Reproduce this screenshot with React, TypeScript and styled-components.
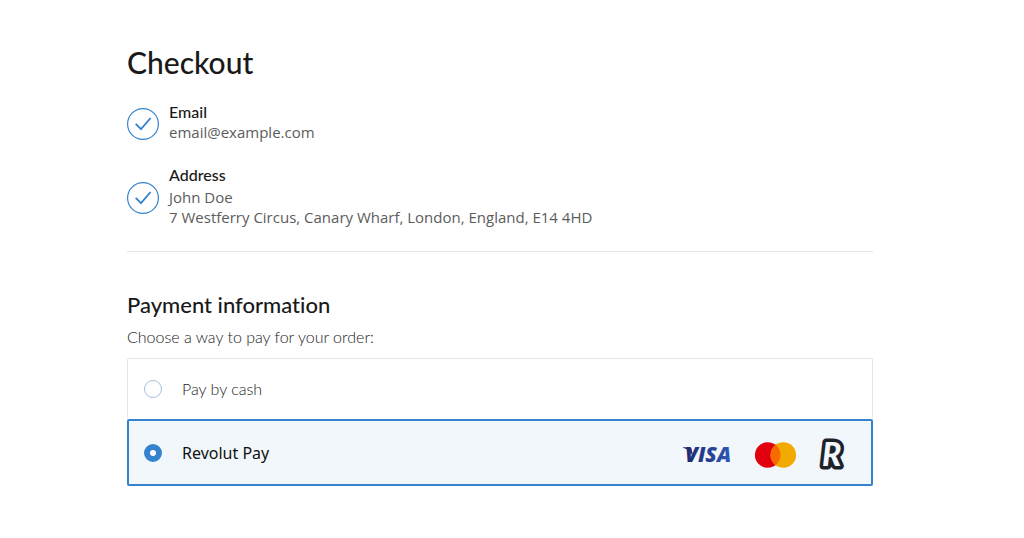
import React, { useState } from "react";
import styled, { createGlobalStyle } from "styled-components";

const GlobalStyle = createGlobalStyle`
  *, *::before, *::after { box-sizing: border-box; }
  body {
    margin: 0;
    background: #ffffff;
    color: #191919;
    font-family: "Open Sans", "Noto Sans", sans-serif;
    font-variant-ligatures: none;
  }
`;

const Page = styled.main`
  padding: 42px 151px 52px 127px;
`;

const PageTitle = styled.h1`
  margin: 0;
  font: 500 30px/40px Lato, "Open Sans", sans-serif;
  font-variant-ligatures: none;
`;

const Summary = styled.section`
  display: flex;
  flex-direction: column;
  gap: 23px;
  padding: 22px 0;
  border-bottom: 1px solid #e5e5e5;
`;

const SummaryRow = styled.div`
  display: flex;
  align-items: center;
  gap: 10px;
`;

const CheckIcon = styled.svg`
  flex: none;
  width: 32px;
  height: 32px;
`;

const SummaryLabel = styled.h2`
  margin: 0;
  padding-bottom: 2px;
  font: 500 16px/16px Lato, "Open Sans", sans-serif;
`;

const SummaryText = styled.div<{ $multiline?: boolean }>`
  padding: ${(p) => (p.$multiline ? "2px 0" : "0 0 2px")};
  color: #5c5c5c;
  font-size: 15px;
  line-height: 20px;
`;

const Payment = styled.section`
  padding-top: 38px;
`;

const PaymentTitle = styled.h2`
  margin: 0;
  font: 500 22px/30px Lato, "Open Sans", sans-serif;
  font-variant-ligatures: none;
`;

const Options = styled.fieldset`
  margin: 0;
  padding: 0;
  border: 0;
  min-width: 0;
`;

const Hint = styled.legend`
  padding: 6px 0 10px;
  color: #222222;
  font: 300 16px/22px Lato, "Open Sans", sans-serif;
`;

const Option = styled.label<{ $selected: boolean }>`
  display: flex;
  align-items: center;
  min-height: ${(p) => (p.$selected ? 67 : 61)}px;
  padding: ${(p) => (p.$selected ? "0 25px 0 15px" : "0 26px 0 16px")};
  border: ${(p) => (p.$selected ? "2px solid #3583cf" : "1px solid #e5e5e5")};
  border-bottom-width: ${(p) => (p.$selected ? 2 : 0)}px;
  border-radius: 2px;
  background: ${(p) => (p.$selected ? "#f2f7fb" : "#ffffff")};
  cursor: pointer;
`;

const Radio = styled.input`
  appearance: none;
  flex: none;
  width: 18px;
  height: 18px;
  margin: 0;
  border: 1px solid #a9bfd8;
  border-radius: 50%;
  background: #ffffff;

  &:checked {
    border: 6px solid #3583cf;
  }
`;

const OptionName = styled.span<{ $selected: boolean }>`
  flex: 1;
  padding-left: 20px;
  color: ${(p) => (p.$selected ? "#111111" : "#222222")};
  font: ${(p) =>
    p.$selected
      ? '400 16px/24px "Noto Sans", sans-serif'
      : '300 16px/24px Lato, "Open Sans", sans-serif'};
`;

const Brands = styled.span`
  display: flex;
  align-items: center;
  gap: 24px;
  padding-top: 4px;
`;

const Logo = styled.svg`
  display: block;
  overflow: visible;
`;

const Check = () => (
  <CheckIcon viewBox="0 0 32 32" fill="none" stroke="#3583cf" aria-hidden="true">
    <circle cx="16" cy="16" r="15.4" strokeWidth="1.2" />
    <path d="M8.7 15.8 14 21.2 23.6 10" strokeWidth="1.8" />
  </CheckIcon>
);

const Visa = () => (
  <Logo width="48" height="16" viewBox="0 0 48 16" role="img" aria-label="Visa">
    <defs>
      <linearGradient id="visa" x1="0" x2="48" y1="0" y2="0" gradientUnits="userSpaceOnUse">
        <stop offset="0" stopColor="#20256b" />
        <stop offset="1" stopColor="#3057b5" />
      </linearGradient>
    </defs>
    <path d="M0 .3h6.600c1 0 1.800.5 2 1.600l1.700 8.700C8.500 6 5.500 2.400 0 .7Z" fill="url(#visa)" />
    <text x="2" y="15" fill="url(#visa)" fontFamily="Open Sans" fontSize="21" fontWeight="800" fontStyle="italic">
      VISA
    </text>
  </Logo>
);

const Mastercard = () => (
  <Logo width="41" height="26" viewBox="0 0 41 26" role="img" aria-label="Mastercard">
    <circle cx="12.700" cy="13" r="12.800" fill="#e2000f" />
    <circle cx="28.300" cy="13" r="12.800" fill="#f2a900" />
    <path d="M20.500 2.850a12.800 12.800 0 0 1 0 20.300 12.800 12.800 0 0 1 0-20.300Z" fill="#f66a00" />
  </Logo>
);

const Revolut = () => (
  <Logo width="26" height="30" viewBox="0 0 26 30" role="img" aria-label="Revolut">
    <text
      x="2"
      y="26"
      fill="#f2f7fb"
      stroke="#1d222b"
      strokeWidth="7"
      strokeLinejoin="round"
      paintOrder="stroke"
      fontFamily="Lato"
      fontSize="32"
      fontWeight="900"
      fontStyle="italic"
    >
      R
    </text>
  </Logo>
);

const methods = [
  { id: "cash", name: "Pay by cash", brands: false },
  { id: "revolut", name: "Revolut Pay", brands: true },
];

export default function App() {
  const [method, setMethod] = useState("revolut");

  return (
    <>
      <GlobalStyle />
      <Page>
        <PageTitle>Checkout</PageTitle>
        <Summary>
          <SummaryRow>
            <Check />
            <div>
              <SummaryLabel>Email</SummaryLabel>
              <SummaryText>email@example.com</SummaryText>
            </div>
          </SummaryRow>
          <SummaryRow>
            <Check />
            <div>
              <SummaryLabel>Address</SummaryLabel>
              <SummaryText $multiline>
                <div>John Doe</div>
                <div>7 Westferry Circus, Canary Wharf, London, England, E14 4HD</div>
              </SummaryText>
            </div>
          </SummaryRow>
        </Summary>
        <Payment>
          <PaymentTitle>Payment information</PaymentTitle>
          <Options>
            <Hint>Choose a way to pay for your order:</Hint>
            {methods.map((m) => (
              <Option key={m.id} $selected={method === m.id}>
                <Radio
                  type="radio"
                  name="method"
                  value={m.id}
                  checked={method === m.id}
                  onChange={() => setMethod(m.id)}
                />
                <OptionName $selected={method === m.id}>{m.name}</OptionName>
                {m.brands && (
                  <Brands>
                    <Visa />
                    <Mastercard />
                    <Revolut />
                  </Brands>
                )}
              </Option>
            ))}
          </Options>
        </Payment>
      </Page>
    </>
  );
}
